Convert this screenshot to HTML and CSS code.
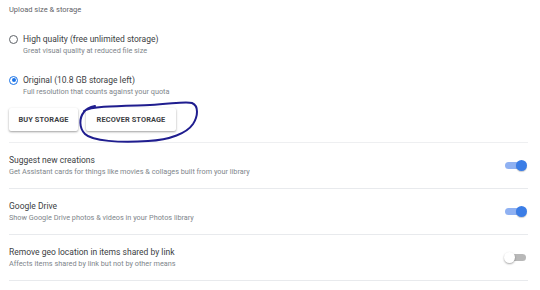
FILE: index.html
```html
<!DOCTYPE html>
<html>
<head>
<meta charset="utf-8">
<link rel="stylesheet" href="styles.css">
</head>
<body>
<div class="page">
  <div class="section-title">Upload size &amp; storage</div>

  <div class="radio-row first">
    <span class="radio"></span>
    <div class="radio-text">
      <div class="label">High quality (free unlimited storage)</div>
      <div class="sub">Great visual quality at reduced file size</div>
    </div>
  </div>

  <div class="radio-row second">
    <span class="radio checked"></span>
    <div class="radio-text">
      <div class="label">Original (10.8 GB storage left)</div>
      <div class="sub">Full resolution that counts against your quota</div>
    </div>
  </div>

  <div class="buttons">
    <button class="btn buy">BUY STORAGE</button>
    <button class="btn recover">RECOVER STORAGE</button>
  </div>

  <div class="list">
    <div class="item">
      <div class="item-text">
        <div class="label">Suggest new creations</div>
        <div class="sub">Get Assistant cards for things like movies &amp; collages built from your library</div>
      </div>
      <span class="toggle on"><span class="thumb"></span></span>
    </div>
    <div class="item">
      <div class="item-text">
        <div class="label">Google Drive</div>
        <div class="sub">Show Google Drive photos &amp; videos in your Photos library</div>
      </div>
      <span class="toggle on"><span class="thumb"></span></span>
    </div>
    <div class="item">
      <div class="item-text">
        <div class="label">Remove geo location in items shared by link</div>
        <div class="sub">Affects items shared by link but not by other means</div>
      </div>
      <span class="toggle off"><span class="thumb"></span></span>
    </div>
  </div>
</div>

<svg class="scribble" width="540" height="290" viewBox="0 0 540 290">
  <path d="M 84 111 C 92 106, 120 106, 150 105 C 172 104, 185 101, 192 103 C 199 106, 198 116, 193 124 C 187 133, 170 140, 148 141 C 120 143, 92 141, 85 134 C 79 128, 79 118, 84 112 C 86 109, 90 107, 95 106"
        fill="none" stroke="#1f1d8f" stroke-width="2" stroke-linecap="round"/>
</svg>
</body>
</html>
```

FILE: styles.css
```css
html, body {
  margin: 0;
  padding: 0;
  background: #ffffff;
}

body {
  font-family: Roboto, "Liberation Sans", Arial, sans-serif;
  width: 540px;
  height: 290px;
  overflow: hidden;
  position: relative;
}

.page {
  padding: 4px 12px 0 9px;
  width: 519px;
}

.section-title {
  font-size: 7.5px;
  line-height: 12px;
  color: #5f6368;
}

.radio-row {
  display: flex;
  align-items: flex-start;
}

.radio-row.first {
  margin-top: 17px;
}

.radio-row.second {
  margin-top: 18px;
}

.radio {
  width: 7px;
  height: 7px;
  border: 1.3px solid #5f6368;
  border-radius: 50%;
  margin-top: 1.5px;
  margin-right: 5px;
  flex: none;
  position: relative;
  box-sizing: content-box;
}

.radio.checked {
  border-color: #1a73e8;
}

.radio.checked::after {
  content: "";
  position: absolute;
  left: 1.5px;
  top: 1.5px;
  width: 4px;
  height: 4px;
  border-radius: 50%;
  background: #1a73e8;
}

.label {
  font-size: 8.5px;
  line-height: 12px;
  color: #3c4043;
}

.sub {
  font-size: 7.3px;
  line-height: 11px;
  color: #80868b;
}

.buttons {
  display: flex;
  gap: 8px;
  margin-top: 11px;
}

.btn {
  font-family: Roboto, "Liberation Sans", Arial, sans-serif;
  font-weight: 700;
  font-size: 7.4px;
  letter-spacing: 0.1px;
  color: #3c4043;
  background: #ffffff;
  border: none;
  border-radius: 2px;
  height: 23px;
  padding: 0;
  box-shadow: 0 1px 2px rgba(0,0,0,0.28), 0 1px 3px rgba(0,0,0,0.12);
}

.btn.buy {
  width: 69px;
}

.btn.recover {
  width: 90px;
}

.list {
  margin-top: 11px;
  border-top: 1px solid #eeeff1;
}

.item {
  display: flex;
  align-items: center;
  justify-content: space-between;
  height: 45px;
  border-bottom: 1px solid #e8eaed;
  box-sizing: content-box;
}

.toggle {
  position: relative;
  width: 20px;
  height: 7px;
  border-radius: 4px;
  margin-right: 3px;
  flex: none;
}

.toggle.on {
  background: #8fb1f2;
}

.toggle.off {
  background: #b8b8b8;
  margin-right: 2px;
}

.thumb {
  position: absolute;
  top: -2px;
  width: 11px;
  height: 11px;
  border-radius: 50%;
}

.toggle.on .thumb {
  right: -2px;
  background: #3b7de6;
  box-shadow: 0 1px 1px rgba(0,0,0,0.2);
}

.toggle.off .thumb {
  left: -2px;
  background: #ffffff;
  box-shadow: 0 1px 2px rgba(0,0,0,0.35);
}

.scribble {
  position: absolute;
  left: 0;
  top: 0;
  pointer-events: none;
}
```
